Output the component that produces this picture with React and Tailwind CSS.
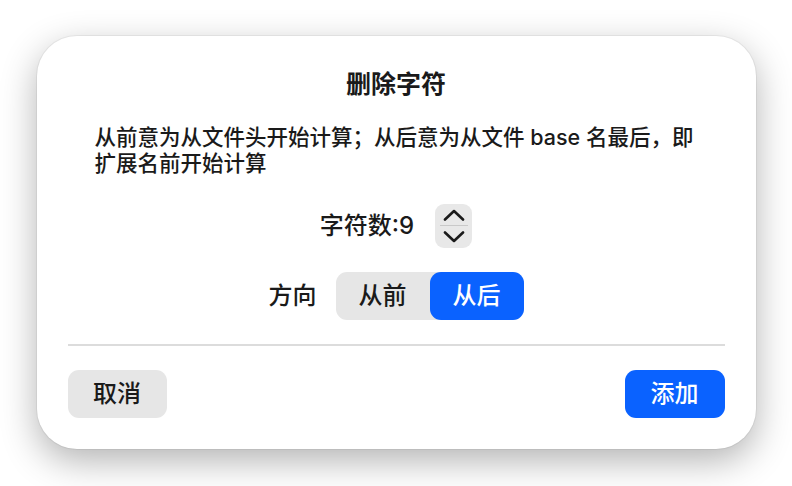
import React from "react";

const font = { fontFamily: 'Inter, "Noto Sans CJK SC", sans-serif' };

function Stepper() {
  return (
    <div className="flex h-[44px] w-[37px] flex-col items-center justify-center rounded-[9px] bg-[#e8e8e8]">
      <svg width="24" height="12" viewBox="0 0 24 12" className="mb-[4px]">
        <polyline points="3,10.5 12,2 21,10.5" fill="none" stroke="#1a1a1a" strokeWidth="2.6" strokeLinecap="round" strokeLinejoin="round" />
      </svg>
      <div className="h-[1.5px] w-[28px] bg-[#c9c9c9]" />
      <svg width="24" height="12" viewBox="0 0 24 12" className="mt-[5px]">
        <polyline points="3,1.5 12,10 21,1.5" fill="none" stroke="#1a1a1a" strokeWidth="2.6" strokeLinecap="round" strokeLinejoin="round" />
      </svg>
    </div>
  );
}

export default function App() {
  return (
    <div className="flex h-[486px] w-[792px] justify-center bg-white pt-[36px]" style={font}>
      <div className="flex h-[413px] w-[719px] flex-col rounded-[40px] bg-white px-[31px] font-medium text-[#1a1a1a] shadow-[0_12px_36px_rgba(0,0,0,0.3),0_0_0_1px_rgba(0,0,0,0.05)]">
        <div className="pt-[33px] text-center text-[25px] font-bold leading-[30px]">删除字符</div>
        <div className="mt-[25px] whitespace-nowrap px-[27px] text-[21.5px] leading-[26px]">
          从前意为从文件头开始计算；从后意为从文件 base 名最后，即
          <br />
          扩展名前开始计算
        </div>
        <div className="mt-[28px] flex items-center justify-center gap-[21px]">
          <span className="text-[24px] leading-[30px]">字符数:9</span>
          <Stepper />
        </div>
        <div className="mt-[24px] flex items-center justify-center gap-[19px]">
          <span className="text-[24px] leading-[30px]">方向</span>
          <div className="flex h-[48px] w-[188px] rounded-[11px] bg-[#e6e6e6]">
            <div className="flex flex-1 items-center justify-center text-[24px]">从前</div>
            <div className="flex flex-1 items-center justify-center rounded-[11px] bg-[#0a62ff] text-[24px] text-white">从后</div>
          </div>
        </div>
        <div className="mt-[24px] h-[1.5px] bg-[#dcdcdc]" />
        <div className="mt-[24px] flex justify-between">
          <div className="flex h-[48px] w-[99px] items-center justify-center rounded-[11px] bg-[#e6e6e6] text-[24px]">取消</div>
          <div className="flex h-[48px] w-[100px] items-center justify-center rounded-[11px] bg-[#0a62ff] text-[24px] text-white">添加</div>
        </div>
      </div>
    </div>
  );
}
